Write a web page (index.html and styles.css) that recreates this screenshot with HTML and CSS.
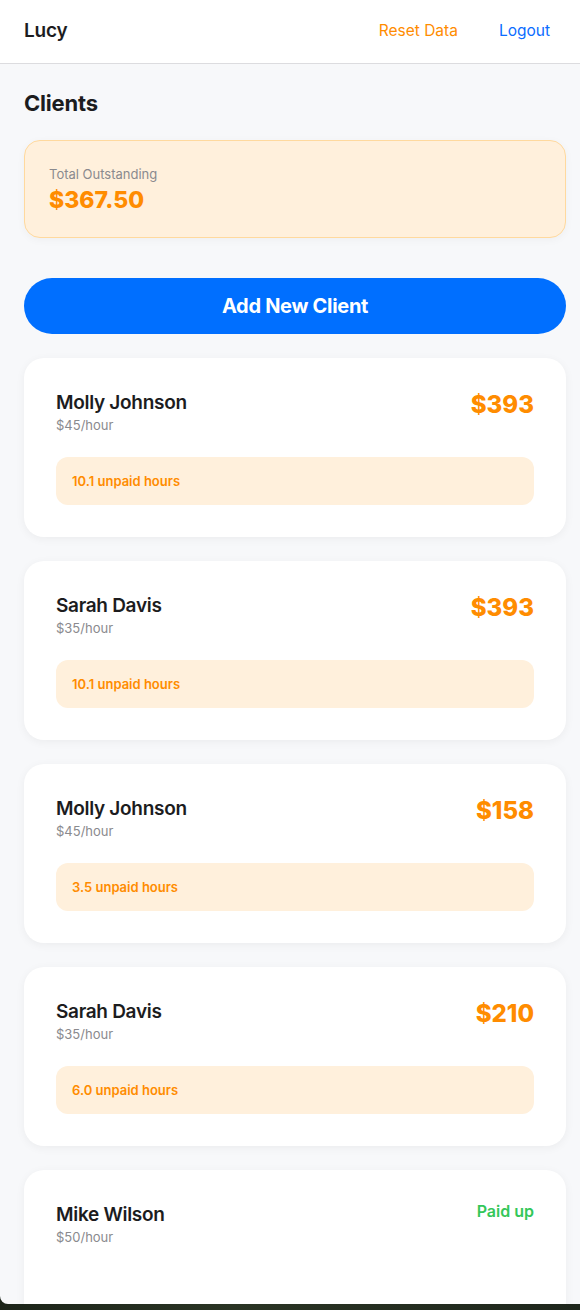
FILE: index.html
```html
<!DOCTYPE html>
<html>
<head>
<meta charset="utf-8">
<link rel="stylesheet" href="styles.css">
</head>
<body>
<div class="app">
  <header class="topbar">
    <div class="brand">Lucy</div>
    <nav class="nav">
      <a class="nav-reset">Reset Data</a>
      <a class="nav-logout">Logout</a>
    </nav>
  </header>
  <main class="main">
    <h1 class="title">Clients</h1>
    <section class="summary">
      <div class="summary-label">Total Outstanding</div>
      <div class="summary-value">$367.50</div>
    </section>
    <button class="add-btn">Add New Client</button>
    <div class="list">
      <div class="card">
        <div class="card-head">
          <div>
            <div class="name">Molly Johnson</div>
            <div class="rate">$45/hour</div>
          </div>
          <div class="amount">$393</div>
        </div>
        <div class="pill">10.1 unpaid hours</div>
      </div>
      <div class="card">
        <div class="card-head">
          <div>
            <div class="name">Sarah Davis</div>
            <div class="rate">$35/hour</div>
          </div>
          <div class="amount">$393</div>
        </div>
        <div class="pill">10.1 unpaid hours</div>
      </div>
      <div class="card">
        <div class="card-head">
          <div>
            <div class="name">Molly Johnson</div>
            <div class="rate">$45/hour</div>
          </div>
          <div class="amount">$158</div>
        </div>
        <div class="pill">3.5 unpaid hours</div>
      </div>
      <div class="card">
        <div class="card-head">
          <div>
            <div class="name">Sarah Davis</div>
            <div class="rate">$35/hour</div>
          </div>
          <div class="amount">$210</div>
        </div>
        <div class="pill">6.0 unpaid hours</div>
      </div>
      <div class="card">
        <div class="card-head">
          <div>
            <div class="name">Mike Wilson</div>
            <div class="rate">$50/hour</div>
          </div>
          <div class="paid">Paid up</div>
        </div>
      </div>
    </div>
  </main>
</div>
</body>
</html>
```

FILE: styles.css
```css
* { box-sizing: border-box; }
html, body { margin: 0; padding: 0; }
body {
  background: linear-gradient(90deg, #1c2419, #2a3424 40%, #1e261c);
  font-family: Inter, "Noto Sans", sans-serif;
  color: #1c1c1e;
  height: 1310px;
  overflow: hidden;
}
.app {
  height: 1304px;
  overflow: hidden;
  background: #f7f8fa;
  border-bottom-left-radius: 8px;
}
.topbar {
  height: 64px;
  background: #fff;
  border-bottom: 1px solid #dcdcdf;
  display: flex;
  align-items: center;
  justify-content: space-between;
  padding: 0 30px 3px 24px;
}
.brand {
  font-size: 19px;
  font-weight: 600;
  letter-spacing: -0.2px;
}
.nav { display: flex; gap: 41px; }
.nav a { font-size: 15.5px; font-weight: 400; }
.nav-reset { color: #ff8c00; }
.nav-logout { color: #0a6cff; }
.main { padding: 0 14px 0 24px; }
.title {
  margin: 0;
  padding-top: 26px;
  font-size: 22px;
  font-weight: 700;
  line-height: 26px;
  letter-spacing: -0.2px;
}
.summary {
  margin-top: 24px;
  height: 98px;
  background: #fff0dc;
  border: 1px solid #ffd99e;
  border-radius: 16px;
  padding: 25px 24px 0;
  box-shadow: 0 2px 8px rgba(0,0,0,0.04);
}
.summary-label {
  font-size: 13px;
  color: #8a8a8e;
  line-height: 16px;
}
.summary-value {
  margin-top: 4px;
  font-size: 23px;
  font-weight: 800;
  color: #ff8c00;
  line-height: 28px;
}
.add-btn {
  display: block;
  width: 100%;
  margin-top: 40px;
  height: 56px;
  border: none;
  border-radius: 28px;
  background: #006fff;
  color: #fff;
  font-family: inherit;
  font-size: 20px;
  font-weight: 700;
  letter-spacing: -0.3px;
}
.list {
  margin-top: 24px;
  display: flex;
  flex-direction: column;
  gap: 24px;
}
.card {
  background: #fff;
  border-radius: 20px;
  padding: 33px 32px 0;
  box-shadow: 0 2px 10px rgba(0,0,0,0.05);
  height: 179px;
}
.card-head {
  display: flex;
  justify-content: space-between;
  align-items: flex-start;
}
.name {
  font-size: 19px;
  font-weight: 600;
  line-height: 24px;
  letter-spacing: -0.3px;
}
.rate {
  font-size: 13px;
  color: #8a8a8e;
  line-height: 18px;
  margin-top: 1px;
}
.amount {
  font-size: 24px;
  font-weight: 800;
  color: #ff8c00;
  line-height: 28px;
}
.paid {
  font-size: 16px;
  font-weight: 600;
  color: #34c759;
  line-height: 20px;
  margin-top: -2px;
}
.pill {
  margin-top: 23px;
  height: 48px;
  background: #fff0dc;
  border-radius: 12px;
  padding: 0 16px;
  display: flex;
  align-items: center;
  font-size: 13px;
  font-weight: 600;
  color: #ff8c00;
}
```
